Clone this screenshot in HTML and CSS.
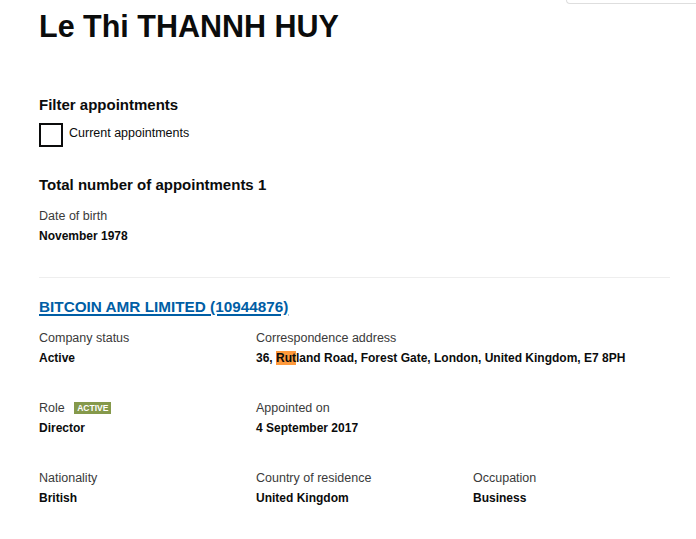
FILE: index.html
```html
<!DOCTYPE html>
<html>
<head>
<title>Le Thi THANNH HUY - Appointments</title>
<meta charset="UTF-8">
<meta name="viewport" content="width=device-width, initial-scale=1.0">
<link rel="stylesheet" href="styles.css">
</head>
<body>
<div class="search_tab"></div>

<div id="wrapper">
	<h1 class="officer_name">Le Thi THANNH HUY</h1>

	<div class="filter">
		<h2>Filter appointments</h2>
		<label class="check_row">
			<span class="check_box"></span>
			<span class="check_label">Current appointments</span>
		</label>
	</div>

	<h2 class="total">Total number of appointments 1</h2>

	<dl class="dob">
		<dt>Date of birth</dt>
		<dd>November 1978</dd>
	</dl>

	<div class="appointment">
		<h3><a href="#">BITCOIN AMR LIMITED (10944876)</a></h3>

		<div class="info_row">
			<dl>
				<dt>Company status</dt>
				<dd>Active</dd>
			</dl>
			<dl class="wide">
				<dt>Correspondence address</dt>
				<dd>36, <mark>Rut</mark>land Road, Forest Gate, London, United Kingdom, E7 8PH</dd>
			</dl>
		</div>

		<div class="info_row">
			<dl>
				<dt>Role <span class="tag">ACTIVE</span></dt>
				<dd>Director</dd>
			</dl>
			<dl>
				<dt>Appointed on</dt>
				<dd>4 September 2017</dd>
			</dl>
		</div>

		<div class="info_row">
			<dl>
				<dt>Nationality</dt>
				<dd>British</dd>
			</dl>
			<dl>
				<dt>Country of residence</dt>
				<dd>United Kingdom</dd>
			</dl>
			<dl>
				<dt>Occupation</dt>
				<dd>Business</dd>
			</dl>
		</div>
	</div>
</div>
</body>
</html>
```

FILE: styles.css
```css
html {
	background-color: #fff;
}

body {
	margin: 0;
	font-family: "Liberation Sans", Arial, sans-serif;
	color: #0b0c0c;
}

/* bit of the search box poking in at the top */
.search_tab {
	position: absolute;
	top: -10px;
	right: 0;
	width: 129px;
	height: 12px;
	border: 1px solid #dedede;
	border-right: none;
	border-radius: 0 0 0 4px;
	background-color: #fff;
}

#wrapper {
	padding: 0 26px 0 39px;
}

.officer_name {
	font-size: 30.5px;
	line-height: 36px;
	margin: 8px 0 0;
}

/**************************
/******FILTER
/**/
.filter {
	margin-top: 51px;
}

.filter h2 {
	font-size: 15px;
	line-height: 20px;
	margin: 0 0 8px;
}

.check_row {
	display: flex;
	align-items: flex-start;
	gap: 6px;
	font-size: 12.5px;
}

.check_label {
	padding-top: 3px;
}

.check_box {
	width: 20px;
	height: 20px;
	border: 2px solid #0b0c0c;
}

.total {
	font-size: 15px;
	line-height: 20px;
	margin: 28px 0 0;
}

dl {
	margin: 0;
}

dt {
	font-size: 12.5px;
	line-height: 16px;
	color: #3a3a3a;
}

dd {
	margin: 4px 0 0;
	font-size: 12px;
	line-height: 16px;
	font-weight: bold;
}

.dob {
	margin-top: 13px;
	padding-bottom: 33px;
	border-bottom: 1px solid #eee;
}

/**************************
/******APPOINTMENT
/**/
.appointment h3 {
	font-size: 15.3px;
	line-height: 20px;
	margin: 19px 0 0;
}

.appointment a {
	color: #005ea5;
	text-decoration-thickness: 2px;
	text-underline-offset: 2px;
}

.info_row {
	display: grid;
	grid-template-columns: 217px 217px 1fr;
	margin-top: 13px;
	padding-bottom: 21px;
}

.info_row .wide {
	grid-column: span 2;
}

.tag {
	display: inline-block;
	margin-left: 6px;
	padding: 1px 3px 0;
	background-color: #85994b;
	color: #fff;
	font-size: 8.5px;
	line-height: 11px;
	font-weight: bold;
	vertical-align: 1px;
}

mark {
	background-color: #ff9a3c;
	color: inherit;
}
```
